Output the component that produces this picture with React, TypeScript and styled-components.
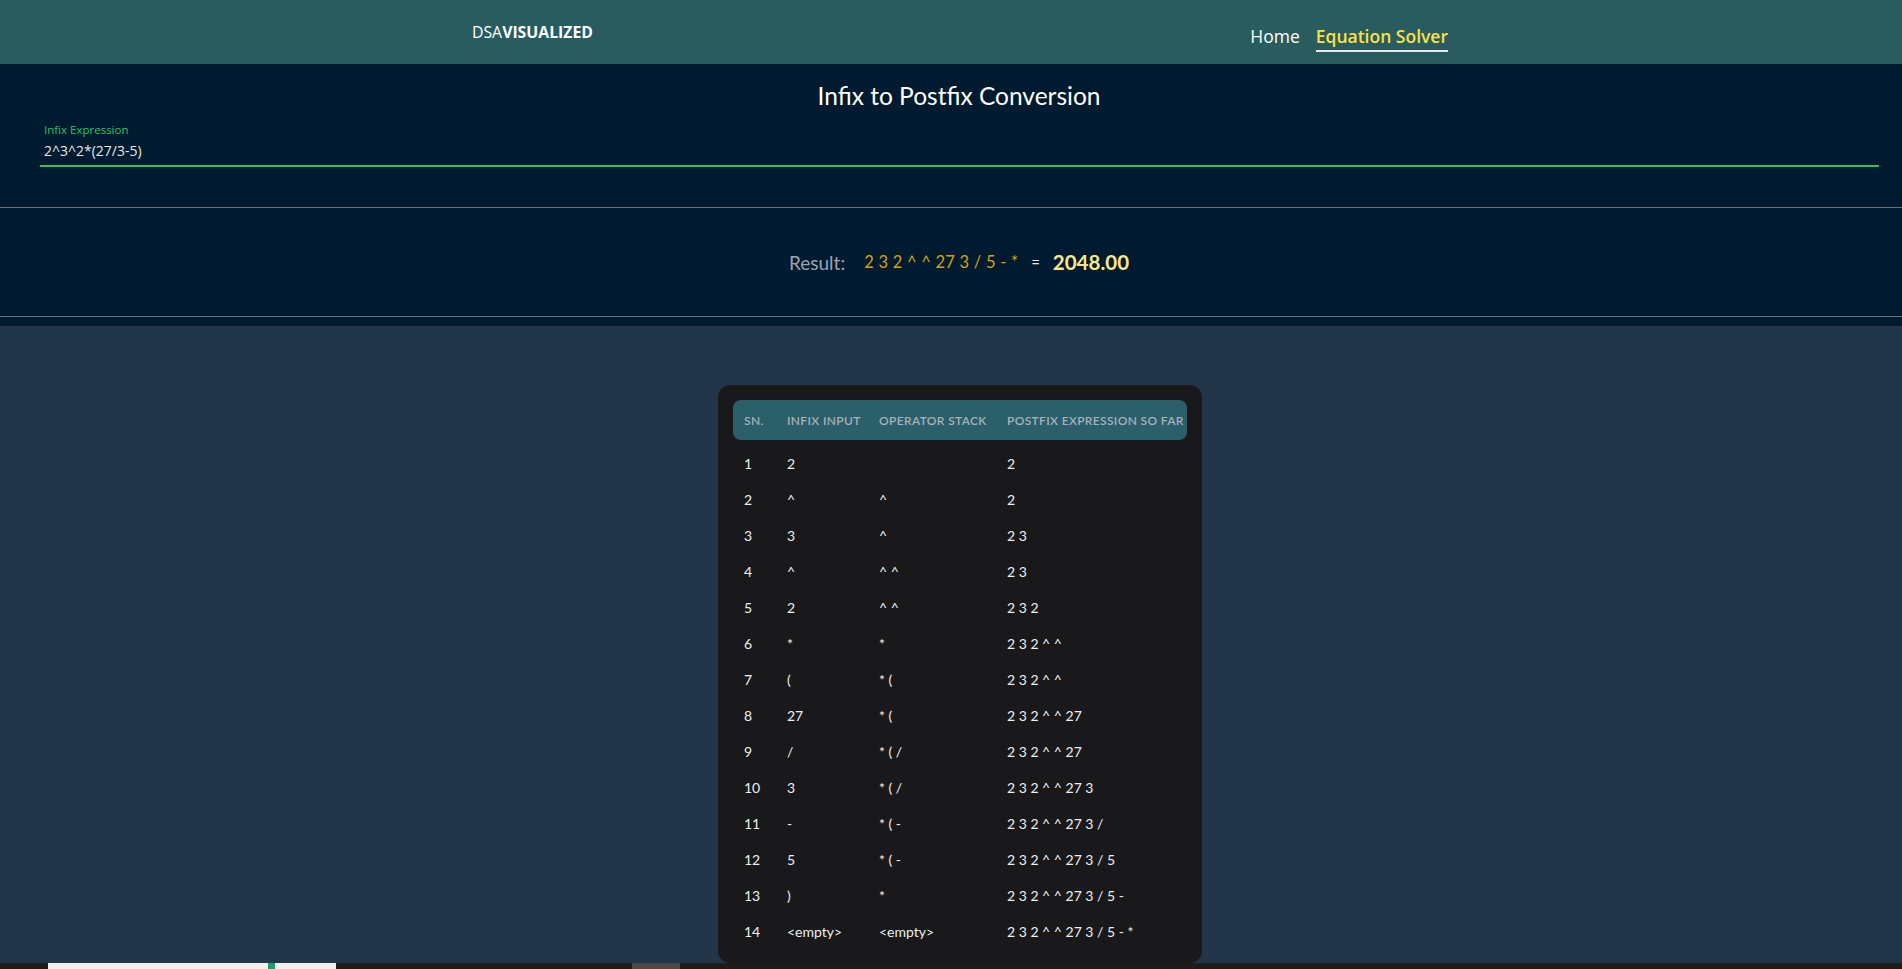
import React from "react";
import styled, { createGlobalStyle } from "styled-components";

const GlobalStyle = createGlobalStyle`
  html, body { margin: 0; padding: 0; }
  body {
    background: #233649;
    font-family: "Lato", "Open Sans", sans-serif;
    overflow: hidden;
  }
`;

const Page = styled.div`
  display: flex;
  flex-direction: column;
  min-height: 969px;
`;

const NavBar = styled.nav`
  height: 64px;
  background: #285c5e;
  display: flex;
  align-items: center;
  justify-content: space-between;
  padding: 0 454px 0 472px;
`;

const Brand = styled.div`
  font-family: "Open Sans", sans-serif;
  font-size: 15.8px;
  color: #ffffff;
  span { font-weight: 700; }
`;

const NavLinks = styled.div`
  display: flex;
  align-items: center;
  gap: 16px;
`;

const NavLink = styled.a<{ $active?: boolean }>`
  font-family: "Open Sans", sans-serif;
  font-size: 17.5px;
  text-decoration: none;
  color: ${(p) => (p.$active ? "#fde047" : "#ffffff")};
  font-weight: ${(p) => (p.$active ? 600 : 400)};
  padding: 8px 0 2px;
  border-bottom: 2px solid ${(p) => (p.$active ? "#e5e7eb" : "transparent")};
  margin-top: 4px;
`;

const DarkSection = styled.section`
  background: #001b2f;
  display: flex;
  flex-direction: column;
  padding-top: 17px;
  padding-bottom: 9px;
`;

const Title = styled.h1`
  margin: 0;
  text-align: center;
  color: #ffffff;
  font-family: "Lato", sans-serif;
  font-weight: 400;
  font-size: 24.5px;
  line-height: 30px;
  padding-left: 16px;
`;

const Field = styled.div`
  margin: 12px 23px 0 40px;
  padding: 0 4px;
  display: flex;
  flex-direction: column;
  border-bottom: 2px solid #22c55e;
`;

const FieldLabel = styled.label`
  font-family: "Open Sans", sans-serif;
  font-size: 11.5px;
  line-height: 14px;
  color: #22c55e;
`;

const FieldInput = styled.input`
  background: transparent;
  border: none;
  outline: none;
  color: #e5e7eb;
  font-family: "Open Sans", sans-serif;
  font-size: 14px;
  padding: 0;
  height: 22px;
  margin: 2px 0 4px;
`;

const Divider = styled.hr`
  margin: 0;
  border: none;
  height: 1px;
  background: #6b7280;
`;

const TopDivider = styled(Divider)`
  margin-top: 40px;
`;

const ResultRow = styled.div`
  height: 108px;
  display: flex;
  align-items: center;
  justify-content: center;
  padding-left: 16px;
  font-family: "Lato", sans-serif;
`;

const ResultLabel = styled.span`
  color: #9ca3af;
  font-size: 19px;
  margin-right: 19px;
`;

const Postfix = styled.span`
  color: #d4a017;
  font-size: 16.5px;
  word-spacing: 0.5px;
`;

const Equals = styled.span`
  color: #e5e7eb;
  font-size: 15px;
  margin: 0 13px;
`;

const Value = styled.span`
  color: #fde68a;
  font-size: 20.5px;
  font-weight: 700;
`;

const LowerSection = styled.main`
  flex: 1;
  display: flex;
  justify-content: center;
  padding: 59px 0 0 18px;
`;

const Card = styled.div`
  width: 454px;
  background: #19191b;
  border-radius: 12px;
  padding: 15px 15px 14px;
  align-self: flex-start;
`;

const Grid = styled.div`
  display: grid;
  grid-template-columns: 43px 92px 128px 1fr;
`;

const HeadRow = styled(Grid)`
  background: #2b5f6a;
  border-radius: 8px;
  height: 40px;
  align-items: center;
  margin-bottom: 5px;
`;

const HeadCell = styled.div`
  padding-left: 11px;
  font-size: 12px;
  letter-spacing: 0.35px;
  font-weight: 600;
  color: #a7b1bb;
  text-transform: uppercase;
  white-space: nowrap;
`;

const BodyRow = styled(Grid)`
  height: 36px;
  align-items: center;
`;

const Cell = styled.div`
  padding-left: 11px;
  font-size: 14px;
  color: #eceff2;
  white-space: pre;
`;

const Taskbar = styled.div`
  position: fixed;
  left: 0;
  right: 0;
  bottom: 0;
  height: 6px;
  background: #1d1b17;
`;

const TaskItem = styled.div<{ $left: number; $width: number; $color: string }>`
  position: absolute;
  top: 0;
  bottom: 0;
  left: ${(p) => p.$left}px;
  width: ${(p) => p.$width}px;
  background: ${(p) => p.$color};
`;

const rows: [string, string, string, string][] = [
  ["1", "2", "", "2"],
  ["2", "^", "^", "2"],
  ["3", "3", "^", "2 3"],
  ["4", "^", "^ ^", "2 3"],
  ["5", "2", "^ ^", "2 3 2"],
  ["6", "*", "*", "2 3 2 ^ ^"],
  ["7", "(", "* (", "2 3 2 ^ ^"],
  ["8", "27", "* (", "2 3 2 ^ ^ 27"],
  ["9", "/", "* ( /", "2 3 2 ^ ^ 27"],
  ["10", "3", "* ( /", "2 3 2 ^ ^ 27 3"],
  ["11", "-", "* ( -", "2 3 2 ^ ^ 27 3 /"],
  ["12", "5", "* ( -", "2 3 2 ^ ^ 27 3 / 5"],
  ["13", ")", "*", "2 3 2 ^ ^ 27 3 / 5 -"],
  ["14", "<empty>", "<empty>", "2 3 2 ^ ^ 27 3 / 5 - *"],
];

export default function App() {
  return (
    <Page>
      <GlobalStyle />
      <NavBar>
        <Brand>
          DSA<span>VISUALIZED</span>
        </Brand>
        <NavLinks>
          <NavLink href="#">Home</NavLink>
          <NavLink href="#" $active>
            Equation Solver
          </NavLink>
        </NavLinks>
      </NavBar>
      <DarkSection>
        <Title>Infix to Postfix Conversion</Title>
        <Field>
          <FieldLabel htmlFor="infix">Infix Expression</FieldLabel>
          <FieldInput id="infix" defaultValue="2^3^2*(27/3-5)" />
        </Field>
        <TopDivider />
        <ResultRow>
          <ResultLabel>Result:</ResultLabel>
          <Postfix>2 3 2 ^ ^ 27 3 / 5 - *</Postfix>
          <Equals>=</Equals>
          <Value>2048.00</Value>
        </ResultRow>
        <Divider />
      </DarkSection>
      <LowerSection>
        <Card>
          <HeadRow>
            <HeadCell>Sn.</HeadCell>
            <HeadCell>Infix Input</HeadCell>
            <HeadCell>Operator Stack</HeadCell>
            <HeadCell>Postfix Expression so far</HeadCell>
          </HeadRow>
          {rows.map((r) => (
            <BodyRow key={r[0]}>
              {r.map((c, i) => (
                <Cell key={i}>{c}</Cell>
              ))}
            </BodyRow>
          ))}
        </Card>
      </LowerSection>
      <Taskbar>
        <TaskItem $left={48} $width={288} $color="#f0f0f0" />
        <TaskItem $left={268} $width={7} $color="#16a36a" />
        <TaskItem $left={632} $width={48} $color="#4d4944" />
      </Taskbar>
    </Page>
  );
}
